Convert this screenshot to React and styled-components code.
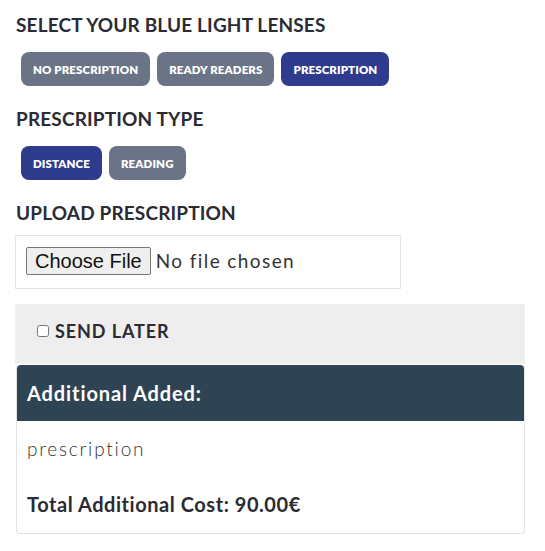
import React from "react";
import styled, { createGlobalStyle } from "styled-components";

const Global = createGlobalStyle`
  html, body { margin: 0; padding: 0; background: #fff; }
  body { font-family: Lato, "Noto Sans", sans-serif; color: #2a2b33; }
`;

const Page = styled.div`
  padding: 12px 20px 0 15px;
  width: 510px;
`;

const Heading = styled.h3`
  margin: 0 0 0 1px;
  font-size: 19px;
  line-height: 26px;
  font-weight: 700;
  letter-spacing: 0.15px;
  text-transform: uppercase;
`;

const OptionRow = styled.div`
  display: flex;
  gap: 7px;
  padding-left: 6px;
  margin: 14px 0 20px;
`;

const Option = styled.button`
  height: 34px;
  padding: 0 12px;
  border: 0;
  border-radius: 8px;
  background: ${(p) => (p.$active ? "#2f3b8c" : "#6b7486")};
  color: #fff;
  font-family: Lato, sans-serif;
  font-size: 11.5px;
  font-weight: 800;
  letter-spacing: 0.1px;
  text-transform: uppercase;
  cursor: pointer;
`;

const UploadBox = styled.div`
  width: 386px;
  height: 54px;
  box-sizing: border-box;
  border: 1px solid #e3e3e3;
  margin-top: 9px;
  padding: 11px 0 0 10px;
`;

const FileInput = styled.input`
  font-family: Lato, sans-serif;
  font-size: 19px;
  letter-spacing: 1.4px;
  color: #333;
  &::file-selector-button {
    height: 28px;
    padding: 0 8px;
    margin-right: 5px;
    border: 1px solid #767676;
    border-radius: 2px;
    background: #efefef;
    font-family: "Liberation Sans", Arial, sans-serif;
    font-size: 20px;
    letter-spacing: 0;
    color: #111;
  }
`;

const SendLater = styled.label`
  display: flex;
  align-items: center;
  gap: 6px;
  margin-top: 15px;
  height: 60px;
  box-sizing: border-box;
  background: #eeeeee;
  padding: 0 0 7px 22px;
  font-size: 18px;
  font-weight: 700;
  letter-spacing: 0.9px;
  text-transform: uppercase;
`;

const Check = styled.input`
  width: 12px;
  height: 12px;
  margin: 0;
`;

const Card = styled.div`
  margin-top: 1px;
  margin-left: 1px;
  border: 1px solid #e2e2e2;
  border-top: 0;
  border-radius: 4px;
`;

const CardHeader = styled.div`
  height: 56px;
  background: #2e4453;
  color: #fff;
  border-radius: 4px 4px 0 0;
  display: flex;
  align-items: center;
  padding-left: 10px;
  font-size: 20px;
  font-weight: 700;
  letter-spacing: 0.9px;
`;

const CardBody = styled.div`
  padding: 16px 10px 17px;
`;

const Item = styled.p`
  margin: 0;
  font-size: 19px;
  line-height: 23px;
  font-weight: 300;
  letter-spacing: 1.8px;
  color: #333;
`;

const Total = styled.p`
  margin: 33px 0 0;
  font-size: 20px;
  line-height: 23px;
  font-weight: 700;
  letter-spacing: 0.55px;
`;

export default function App() {
  return (
    <>
      <Global />
      <Page>
        <Heading>Select your blue light lenses</Heading>
        <OptionRow>
          <Option>No prescription</Option>
          <Option>Ready readers</Option>
          <Option $active>Prescription</Option>
        </OptionRow>
        <Heading>Prescription type</Heading>
        <OptionRow>
          <Option $active>Distance</Option>
          <Option>Reading</Option>
        </OptionRow>
        <Heading>Upload prescription</Heading>
        <UploadBox>
          <FileInput type="file" />
        </UploadBox>
        <SendLater>
          <Check type="checkbox" />
          Send later
        </SendLater>
        <Card>
          <CardHeader>Additional Added:</CardHeader>
          <CardBody>
            <Item>prescription</Item>
            <Total>Total Additional Cost: 90.00€</Total>
          </CardBody>
        </Card>
      </Page>
    </>
  );
}
